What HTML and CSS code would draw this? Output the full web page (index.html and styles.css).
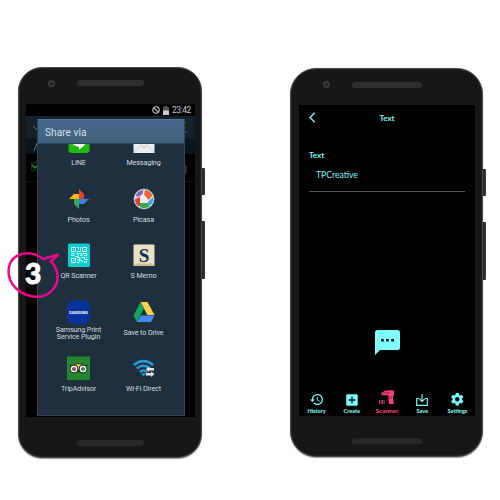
FILE: index.html
```
<!DOCTYPE html>
<html lang="en">
<head>
<meta charset="utf-8">
<title>Share to QR Scanner</title>
<link rel="stylesheet" href="styles.css">
</head>
<body>
<main class="stage">
  <section class="phone phone-share">
    <i class="key key-power"></i><i class="key key-volume"></i>
    <div class="bezel-top"><i class="camera"></i><i class="speaker"></i></div>
    <div class="screen share-screen">
      <div class="status">
        <svg width="8" height="8" viewBox="0 0 8 8"><circle cx="4" cy="4" r="3.2" fill="none" stroke="#c8c8c8" stroke-width="1.1"/><path d="M1.8 1.8l4.4 4.4" stroke="#c8c8c8" stroke-width="1.1"/></svg>
        <svg width="6" height="9" viewBox="0 0 6 9"><path d="M1.5 0h3v1H6v4H0V1h1.500z" fill="#555"/><path d="M0 4.500h6V9H0z" fill="#ccc"/></svg>
        <span class="clock">23:42</span>
      </div>
      <svg class="behind" width="169" height="301" viewBox="26 116 169 301">
        <path d="M26 116h169v23H26z" fill="#14212c"/><path d="M26 139h169v15H26z" fill="#0c151d"/>
        <path d="M26 181.500h169" stroke="#111"/>
        <path d="M33 126l4 4M34 151l3-8" stroke="#68737b" fill="none"/>
        <path d="M31.500 162.500h6v8h-6z" fill="#050805" stroke="#202520"/><path d="M32 165l3 3 3-3" stroke="#398b19" stroke-width="1.300" fill="none"/>
        <path d="M185 122v2M185 126v2M185 132h2" stroke="#53616b" fill="none"/><path d="M184 166h2v7H184" stroke="#555" fill="none"/>
      </svg>
      <div class="dialog">
        <h1 class="dialog-title">Share via</h1>
        <div class="apps">
          <div class="app app-cut">
            <svg width="22" height="24" viewBox="0 0 22 24"><rect x=".5" y="1" width="21" height="23" rx="3" fill="#1fba0c"/><path d="M3 10c0-7 16-7 16 0 0 5-4 8-8 10.500V18C6 17 3 15 3 10z" fill="#fff"/></svg>
            <span>LINE</span>
          </div>
          <div class="app app-cut">
            <svg width="22" height="24" viewBox="0 0 22 24"><path d="M.5 9h21v15H.5z" fill="#ededed"/><path d="M1 23.500l7-7 3 2 3-2 7 7M1 10l10 8.500L21 10" stroke="#c4c4c4" stroke-width=".8" fill="none"/></svg>
            <span>Messaging</span>
          </div>
          <div class="app">
            <svg width="22" height="24" viewBox="0 0 22 24"><path d="M11 12V2l5 5v5z" fill="#e0432f"/><path d="M11 12h10l-5 5h-5z" fill="#3f7fe8"/><path d="M11 12v10l-5-5v-5z" fill="#37a855"/><path d="M11 12H1l5-5h5z" fill="#fbbc17"/></svg>
            <span>Photos</span>
          </div>
          <div class="app">
            <svg width="22" height="24" viewBox="0 0 22 24"><circle cx="11" cy="12" r="10" fill="#eee"/><path d="M12 3a9 9 0 0 1 7.500 5.500l-4 4.500L11 7.500z" fill="#ef6530"/><path d="M20 10a9 9 0 0 1-2 8h-4l1-3z" fill="#39a7e1"/><path d="M17 19a9 9 0 0 1-10 1v-4h8z" fill="#34a853"/><path d="M5 19a9 9 0 0 1-3-7l5-2v9z" fill="#d94038"/><path d="M2.500 9.500A9 9 0 0 1 10.500 3l-1 4-3 2.500z" fill="#8461bd"/><circle cx="11" cy="12" r="10" fill="none" stroke="#bfc2c5" stroke-width=".7"/></svg>
            <span>Picasa</span>
          </div>
          <div class="app">
            <svg width="22" height="24" viewBox="0 0 22 24"><rect y=".5" width="22" height="23.500" rx="1.500" fill="#06cfd1"/><g fill="none" stroke="#d8ffff" stroke-width="1"><path d="M3.500 4.500h4v4h-4zM14.500 4.500h4v4h-4zM3.500 15.500h4v4h-4z"/><path d="M5 6.500h1M16 6.500h1M5 17.500h1M9 4.500h1.500v2M12.500 4v4.500H9M3 10.500h3v2H3M8 10.500h2v3H7M11 10.500h3v2h-2M15 10.500h4v2h-3M9 14.500h3v2H9M13.500 14.500h3v2h3M9 19.500h2v-2h3v2M15.500 18.500h1.500v1.500M18.500 14v1M18.500 18v2"/></g></svg>
            <span>QR Scanner</span>
          </div>
          <div class="app">
            <svg width="22" height="24" viewBox="0 0 22 24"><rect x=".5" y="1.500" width="21" height="21.500" rx="1" fill="#e8e1c4"/><path d="M.5 20.500h21V22a1 1 0 0 1-1 1h-19a1 1 0 0 1-1-1z" fill="#c9c09b"/><text x="11" y="18.500" text-anchor="middle" class="memo-s">S</text></svg>
            <span>S Memo</span>
          </div>
          <div class="app">
            <svg width="23" height="24" viewBox="0 0 23 24"><rect y=".5" width="23" height="23.500" rx="6.500" fill="#08339c"/><text x="11.500" y="14" text-anchor="middle" class="samsung">SAMSUNG</text></svg>
            <span class="two-line">Samsung Print<br>Service Plugin</span>
          </div>
          <div class="app">
            <svg width="22" height="24" viewBox="0 0 22 24"><path d="M7.500 2h7l7 13h-7z" fill="#ffd04b"/><path d="M7.500 2L.5 15.500 4 22l7-13.500z" fill="#1ca261"/><path d="M8 15.500h13.500L18 22H4z" fill="#4688f4"/></svg>
            <span>Save to Drive</span>
          </div>
          <div class="app">
            <svg width="23" height="24" viewBox="0 0 23 24"><path d="M0 .5h23V24H0z" fill="#248730"/><path d="M5 9.500q6.500-4 13 0l-6.500 4z" fill="#e9c55c"/><path d="M2.500 9.500H6q5.500-4 11 0h3.500" fill="none" stroke="#17271a" stroke-width="1"/><circle cx="7" cy="13" r="4" fill="#f7f7f1" stroke="#17271a"/><circle cx="16" cy="13" r="4" fill="#f7f7f1" stroke="#17271a"/><circle cx="7" cy="13" r="1.600" fill="#c83c43" stroke="#333" stroke-width=".6"/><circle cx="16" cy="13" r="1.600" fill="#36985a" stroke="#333" stroke-width=".6"/><path d="M10.500 15l1 2 1-2z" fill="#17271a"/></svg>
            <span>TripAdvisor</span>
          </div>
          <div class="app">
            <svg width="22" height="24" viewBox="0 0 22 24"><g fill="none" stroke="#289bd6" stroke-width="2.500"><path d="M.8 9q9.700-8 19.400 0M3.800 12.500q6.700-5.600 13.400 0M6.800 16q3.700-3 7.400 0"/></g><path d="M8 17.800q2.500-1.500 5 0L10.500 20.300z" fill="#289bd6"/><path d="M13 13l3-2.500V12h5v2.500h-5V16zM21.500 18L18 15.500V17h-5v2.500h5V21z" fill="#e6e9eb"/></svg>
            <span>Wi-Fi Direct</span>
          </div>
        </div>
      </div>
    </div>
    <div class="bezel-bottom"><i class="speaker"></i></div>
  </section>

  <section class="phone phone-result">
    <i class="key key-power"></i><i class="key key-volume"></i>
    <div class="bezel-top"><i class="camera"></i><i class="speaker"></i></div>
    <div class="screen result-screen">
      <header class="bar">
        <svg width="7" height="11" viewBox="0 0 7 11"><path d="M5.700 .7L1 5.500 5.700 10.300" fill="none" stroke="#77eeee" stroke-width="1.500"/></svg>
        <h2>Text</h2>
      </header>
      <div class="field"><strong>Text</strong><p>TPCreative</p></div>
      <svg class="bubble" width="25" height="25" viewBox="0 0 25 25"><path d="M2.500 0h20A2.500 2.500 0 0 1 25 2.500v15a2.500 2.500 0 0 1-2.500 2.500H5l-5 5V2.500A2.500 2.500 0 0 1 2.500 0z" fill="#80ffff"/><path d="M6 9h2.800v2.600H6zM11.100 9h2.800v2.600h-2.800zM16.200 9H19v2.600h-2.800z" fill="#031111"/></svg>
      <nav class="tabs">
        <div class="tab"><svg width="13" height="13" viewBox="1 3 21 18"><path fill="#7ff" d="M13 3a9 9 0 0 0-9 9H1l3.890 3.890.07.14L9 12H6a7 7 0 1 1 2.060 4.940l-1.420 1.420A9 9 0 1 0 13 3zm-1 5v5l4.280 2.540.72-1.210-3.500-2.080V8z"/></svg><span>History</span></div>
        <div class="tab"><svg width="12" height="12" viewBox="0 0 12 12"><rect x=".2" y=".3" width="11.500" height="11.500" rx="1.300" fill="#7ff"/><path d="M6 2.800v6.400M2.800 6h6.400" stroke="#001313" stroke-width="1.300"/></svg><span>Create</span></div>
        <div class="tab tab-active"><svg width="16" height="15" viewBox="0 0 16 15"><path d="M2.500 3Q5 .3 9 .3h4.500q1.500 0 1.500 1.500v3l-1.200 2 1 7.200h-4.500L9.200 8.500l.6-3L3 5q-1.500-.7-.5-2z" fill="#ff3f80"/><path d="M4 3.300l7-.6M9.600 8.500l2.500-.7v-2" stroke="#000" stroke-width=".5" fill="none"/><path d="M.5 10v4M2.200 10v4M3.500 10v4M5.100 10v4" stroke="#e33b73" stroke-width=".9"/></svg><span>Scanner</span></div>
        <div class="tab"><svg width="12" height="12" viewBox="0 0 12 12"><path d="M6 .3v7M3.300 4.800L6 7.500l2.700-2.700M3 4.500H.7v6.800h10.600V4.500H9" fill="none" stroke="#7ff" stroke-width="1.150"/></svg><span>Save</span></div>
        <div class="tab"><svg width="12.500" height="12.500" viewBox="2 2 20 20"><path fill="#7ff" d="M19.430 12.980c.04-.32.07-.64.07-.98s-.03-.66-.07-.98l2.110-1.650a.5.5 0 0 0 .12-.64l-2-3.460a.5.5 0 0 0-.61-.22l-2.490 1a7.300 7.300 0 0 0-1.690-.98l-.38-2.650A.49.49 0 0 0 14 2h-4a.49.49 0 0 0-.49.420l-.38 2.650c-.61.25-1.170.59-1.690.98l-2.490-1a.5.5 0 0 0-.61.22l-2 3.460a.5.5 0 0 0 .12.640l2.110 1.650c-.04.32-.07.65-.07.98s.03.66.07.98l-2.110 1.650a.5.5 0 0 0-.12.640l2 3.460a.5.5 0 0 0 .61.220l2.490-1c.52.4 1.080.73 1.690.98l.38 2.650c.03.24.24.42.49.420h4c.25 0 .46-.18.49-.42l.38-2.650c.61-.25 1.170-.59 1.690-.98l2.490 1a.5.5 0 0 0 .61-.22l2-3.460a.5.5 0 0 0-.12-.64zM12 15.500a3.500 3.500 0 1 1 0-7 3.500 3.500 0 0 1 0 7z"/></svg><span>Settings</span></div>
      </nav>
    </div>
    <div class="bezel-bottom"><i class="speaker"></i></div>
  </section>

  <div class="callout">
    <svg width="53" height="50" viewBox="0 0 53 50"><path d="M36 8L51.300 3.500 43.800 10.500C52 18 53 31 45.500 39 35 51 14 46 5 32.500-1.500 21 1 7 14 3.200 22 1 30 3 36 8z"/></svg>
    <b>3</b>
  </div>
</main>
</body>
</html>
```
FILE: styles.css
```
* { box-sizing: border-box; }
body { margin: 0; background: #fff; }
h1, h2, p { margin: 0; font-weight: 400; }
svg { display: block; flex: none; overflow: visible; }

.stage { position: relative; width: 500px; height: 500px; display: flex; align-items: flex-start; gap: 88px; padding: 67px 0 0 18px; overflow: hidden; }
.phone { position: relative; display: flex; flex-direction: column; background: #171717; border: 1px solid #494949; box-shadow: inset 0 0 1px 1px #222, 0 1px 1px #999; }
.phone-share { width: 184px; height: 391px; border-radius: 24px; padding: 0 6px 0 7px; }
.phone-result { width: 193px; height: 389px; margin-top: 1px; border-radius: 26px; padding: 0 7px 0 8px; }

.bezel-top { display: flex; height: 36px; flex: none; align-items: center; }
.phone-share .bezel-top { padding: 0 0 6px 22px; }
.phone-result .bezel-top { padding: 0 0 5px 24px; }
.camera { width: 7px; height: 7px; border: 2px solid #383838; border-radius: 50%; background: #1c1c1c; }
.speaker { width: 67px; height: 6px; border-radius: 3px; background: #2d2d2d; }
.camera + .speaker { margin-left: 22px; }
.phone-result .speaker { width: 70px; }
.bezel-bottom { display: flex; justify-content: center; padding-top: 23px; }
.bezel-bottom .speaker { background: #272727; }
.phone-result .bezel-bottom { padding-top: 22px; }
.key { position: absolute; right: -4px; width: 3px; background: linear-gradient(90deg, #222, #3c3c3c); border-radius: 0 1px 1px 0; }
.key-power { top: 100px; height: 27px; }
.key-volume { top: 153px; height: 58px; }

.screen { position: relative; flex: none; background: #000; overflow: hidden; }
.share-screen { width: 169px; height: 313px; }
.status { display: flex; align-items: center; justify-content: flex-end; gap: 3px; height: 12px; padding-right: 4px; }
.clock { width: 19px; color: #c5c8c9; font: 8.500px/12px Roboto, sans-serif; letter-spacing: -.45px; white-space: nowrap; }
.behind { position: absolute; left: 0; top: 12px; }
.dialog { position: relative; width: 148px; height: 297px; margin: 2.500px 0 0 11px; background: #1e2f3e; border: 1px solid #34434e; border-top-color: #557492; border-radius: 1px; overflow: hidden; }
.dialog-title { height: 24px; padding-left: 7px; background: linear-gradient(#45698b, #40617f); border-bottom: 1px solid #31495d; color: #d8e0e5; font: 10.200px/25px Roboto, sans-serif; }
.apps { display: grid; grid-template-columns: 65px 65px; grid-template-rows: 43.500px 56.300px 56.300px 56.300px 56.300px; padding-left: 8px; height: 272px; overflow: hidden; }
.app { display: flex; flex-direction: column; align-items: center; text-align: center; color: #d5dade; font: 7.200px/8px Roboto, sans-serif; letter-spacing: -.12px; white-space: nowrap; }
.app svg { margin-bottom: 5px; }
.app-cut svg { margin-top: -15px; margin-bottom: 6px; }
.app .two-line { margin-top: -3px; line-height: 7.500px; }
.memo-s { font: bold 19px "Liberation Serif", serif; letter-spacing: 0; fill: #13275a; }
.samsung { font: bold 3.900px Roboto, sans-serif; letter-spacing: 0; fill: #fff; }

.result-screen { width: 176px; height: 311px; display: flex; flex-direction: column; color: #7df5f5; font-family: Lato, sans-serif; }
.bar { display: grid; grid-template-columns: 1fr auto 1fr; align-items: center; height: 25px; padding: 0 10px; }
.bar h2 { font: 700 8px/12px Lato, sans-serif; }
.field { margin: 18px 10px 0; height: 43.500px; padding-top: 2px; border-bottom: 1px solid #555; }
.field strong { display: block; font-size: 8px; line-height: 11px; }
.field p { margin: 9px 0 0 7px; font-size: 8.600px; line-height: 11px; }
.bubble { margin: auto 0 0 75.500px; }
.tabs { display: grid; grid-template-columns: repeat(5, 1fr); margin-top: 35px; height: 26.500px; }
.tab { display: flex; flex-direction: column; align-items: center; justify-content: flex-end; gap: 2.500px; font: 900 5.500px/7px Lato, sans-serif; padding-bottom: 2px; }
.tab-active { color: #ff3f80; font-size: 6.300px; padding-bottom: 3px; }

.callout { position: absolute; left: 7px; top: 250.500px; width: 53px; height: 50px; }
.callout svg { position: absolute; left: 0; top: 0; }
.callout path { fill: none; stroke: #ec078b; stroke-width: 2.500; }
.callout b { position: absolute; left: 18px; top: 8px; color: #fff; font: 900 28px/28px Lato, sans-serif; -webkit-text-stroke: 1px #fff; }
```
